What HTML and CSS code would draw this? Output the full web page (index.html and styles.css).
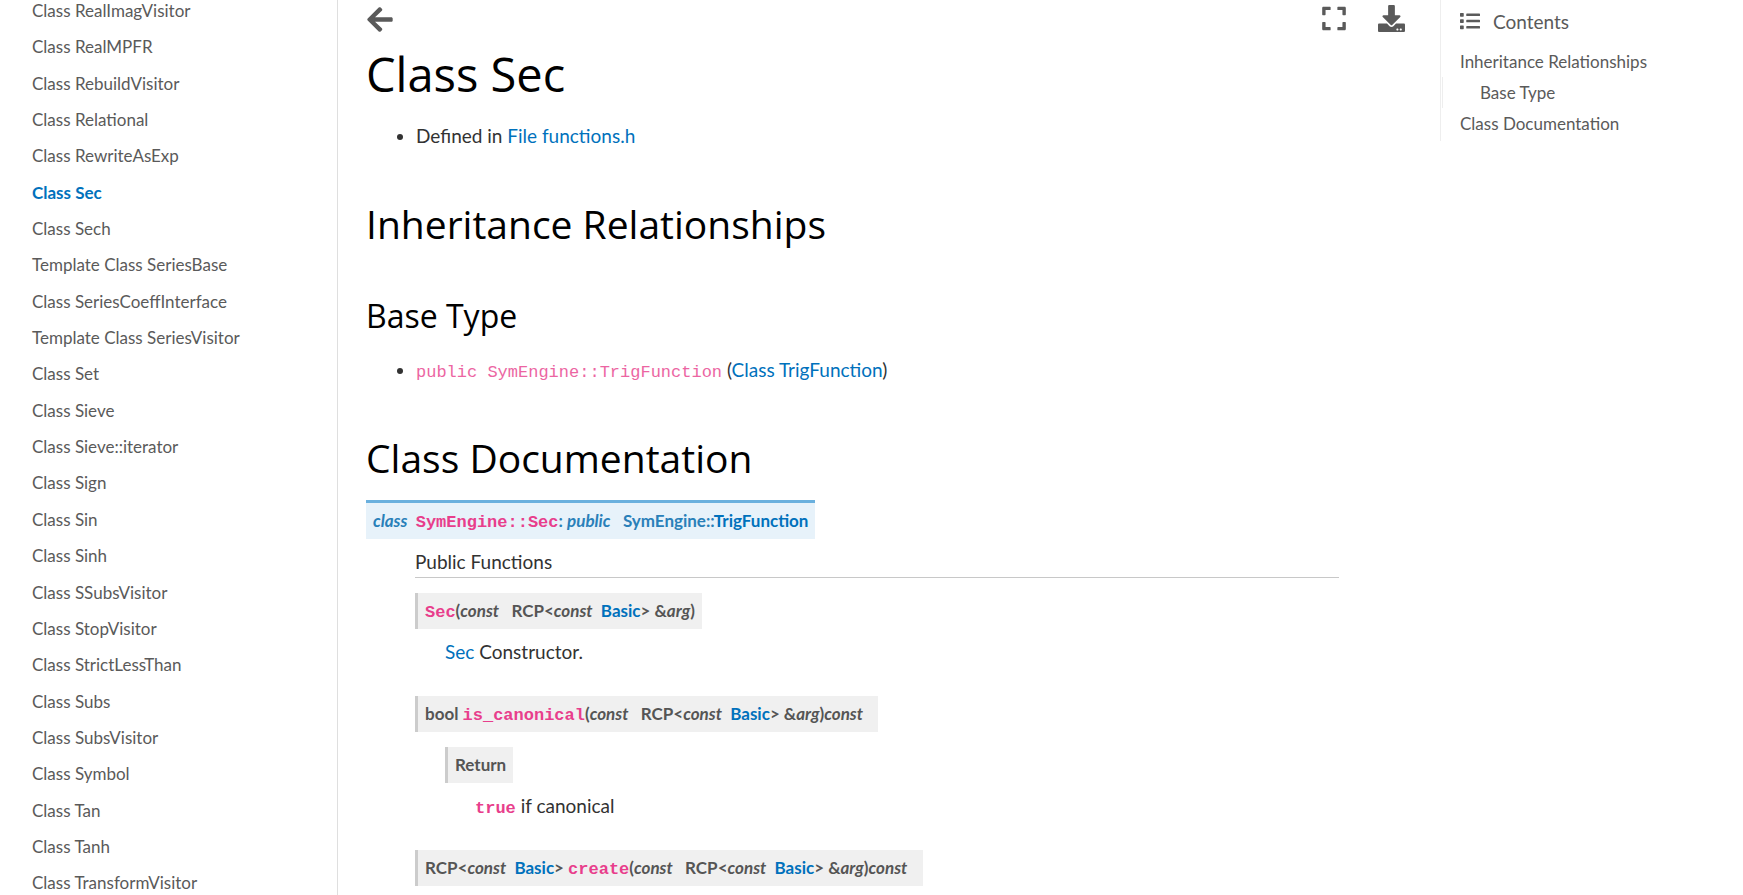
FILE: index.html
```html
<!DOCTYPE html>
<html lang="en">
<head>
<meta charset="utf-8">
<title>Class Sec</title>
<link rel="stylesheet" href="styles.css">
</head>
<body>
<div class="layout">
  <nav class="sidebar" aria-label="Classes">
    <ul class="nav-list">
      <li><a href="#">Class RealImagVisitor</a></li>
      <li><a href="#">Class RealMPFR</a></li>
      <li><a href="#">Class RebuildVisitor</a></li>
      <li><a href="#">Class Relational</a></li>
      <li><a href="#">Class RewriteAsExp</a></li>
      <li><a href="#" class="current">Class Sec</a></li>
      <li><a href="#">Class Sech</a></li>
      <li><a href="#">Template Class SeriesBase</a></li>
      <li><a href="#">Class SeriesCoeffInterface</a></li>
      <li><a href="#">Template Class SeriesVisitor</a></li>
      <li><a href="#">Class Set</a></li>
      <li><a href="#">Class Sieve</a></li>
      <li><a href="#">Class Sieve::iterator</a></li>
      <li><a href="#">Class Sign</a></li>
      <li><a href="#">Class Sin</a></li>
      <li><a href="#">Class Sinh</a></li>
      <li><a href="#">Class SSubsVisitor</a></li>
      <li><a href="#">Class StopVisitor</a></li>
      <li><a href="#">Class StrictLessThan</a></li>
      <li><a href="#">Class Subs</a></li>
      <li><a href="#">Class SubsVisitor</a></li>
      <li><a href="#">Class Symbol</a></li>
      <li><a href="#">Class Tan</a></li>
      <li><a href="#">Class Tanh</a></li>
      <li><a href="#">Class TransformVisitor</a></li>
    </ul>
  </nav>
  <main class="main">
    <div class="topbar">
      <button class="icon-button" type="button" aria-label="Toggle navigation">
        <svg width="28" height="29" viewBox="0 0 448 512"><path d="M257.500 445.100l-22.200 22.200c-9.400 9.400-24.600 9.400-33.900 0L7 273c-9.400-9.400-9.400-24.600 0-33.900L201.400 44.700c9.400-9.400 24.600-9.400 33.900 0l22.200 22.200c9.500 9.500 9.300 25-.4 34.300L136.600 216H424c13.300 0 24 10.700 24 24v32c0 13.300-10.700 24-24 24H136.600l120.500 114.800c9.800 9.300 10 24.800.4 34.300z"/></svg>
      </button>
      <div class="actions">
        <button class="icon-button" type="button" aria-label="Fullscreen mode">
          <svg width="24" height="27" viewBox="0 0 448 512"><path d="M0 180V56c0-13.300 10.700-24 24-24h124c6.600 0 12 5.400 12 12v40c0 6.600-5.400 12-12 12H64v84c0 6.600-5.400 12-12 12H12c-6.600 0-12-5.400-12-12zM288 44v40c0 6.600 5.400 12 12 12h84v84c0 6.600 5.400 12 12 12h40c6.600 0 12-5.400 12-12V56c0-13.300-10.700-24-24-24H300c-6.600 0-12 5.400-12 12zm148 276h-40c-6.600 0-12 5.400-12 12v84h-84c-6.600 0-12 5.400-12 12v40c0 6.600 5.400 12 12 12h124c13.300 0 24-10.700 24-24V332c0-6.600-5.400-12-12-12zM160 468v-40c0-6.600-5.400-12-12-12H64v-84c0-6.600-5.400-12-12-12H12c-6.600 0-12 5.400-12 12v124c0 13.300 10.700 24 24 24h124c6.600 0 12-5.400 12-12z"/></svg>
        </button>
        <button class="icon-button" type="button" aria-label="Download this page">
          <svg width="27" height="27" viewBox="0 0 512 512"><path d="M216 0h80c13.300 0 24 10.700 24 24v168h87.700c17.800 0 26.700 21.500 14.100 34.100L269.700 378.300c-7.500 7.500-19.800 7.500-27.300 0L90.100 226.100c-12.600-12.600-3.700-34.100 14.100-34.100H192V24c0-13.300 10.700-24 24-24zm296 376v112c0 13.300-10.700 24-24 24H24c-13.300 0-24-10.700-24-24V376c0-13.300 10.700-24 24-24h146.700l49 49c20.100 20.100 52.500 20.100 72.600 0l49-49H488c13.300 0 24 10.700 24 24zm-124 88c0-11-9-20-20-20s-20 9-20 20 9 20 20 20 20-9 20-20zm64 0c0-11-9-20-20-20s-20 9-20 20 9 20 20 20 20-9 20-20z"/></svg>
        </button>
      </div>
    </div>
    <article class="article">
      <h1>Class Sec</h1>
      <ul class="bullets">
        <li>Defined in <a href="#">File functions.h</a></li>
      </ul>
      <section>
        <h2 id="inheritance">Inheritance Relationships</h2>
        <h3 id="base-type">Base Type</h3>
        <ul class="bullets">
          <li><code class="literal">public SymEngine::TrigFunction</code> (<a href="#">Class TrigFunction</a>)</li>
        </ul>
      </section>
      <section>
        <h2 id="documentation">Class Documentation</h2>
        <dl class="class-doc">
          <dt class="signature signature-class"><em>class</em> &nbsp;<code>SymEngine::Sec</code>: <em>public</em> &nbsp; SymEngine::<a href="#">TrigFunction</a></dt>
          <dd>
            <p class="rubric">Public Functions</p>
            <dl class="member">
              <dt class="signature"><code>Sec</code>(<em>const</em> &nbsp; RCP&lt;<em>const</em>&nbsp; <a href="#">Basic</a>&gt; &amp;<em>arg</em>)</dt>
              <dd><p><a href="#">Sec</a> Constructor.</p></dd>
            </dl>
            <dl class="member">
              <dt class="signature">bool <code>is_canonical</code>(<em>const</em> &nbsp; RCP&lt;<em>const</em>&nbsp; <a href="#">Basic</a>&gt; &amp;<em>arg</em>)<em>const</em> &nbsp; </dt>
              <dd>
                <dl class="field">
                  <dt class="signature">Return</dt>
                  <dd><p><code>true</code> if canonical</p></dd>
                </dl>
              </dd>
            </dl>
            <dl class="member">
              <dt class="signature">RCP&lt;<em>const</em>&nbsp; <a href="#">Basic</a>&gt; <code>create</code>(<em>const</em> &nbsp; RCP&lt;<em>const</em>&nbsp; <a href="#">Basic</a>&gt; &amp;<em>arg</em>)<em>const</em> &nbsp; </dt>
            </dl>
          </dd>
        </dl>
      </section>
    </article>
  </main>
  <aside class="toc-column">
    <nav class="toc" aria-label="Contents">
      <div class="toc-title">
        <svg width="20" height="20" viewBox="0 0 512 512"><path d="M80 368H16a16 16 0 0 0-16 16v64a16 16 0 0 0 16 16h64a16 16 0 0 0 16-16v-64a16 16 0 0 0-16-16zm0-320H16A16 16 0 0 0 0 64v64a16 16 0 0 0 16 16h64a16 16 0 0 0 16-16V64a16 16 0 0 0-16-16zm0 160H16a16 16 0 0 0-16 16v64a16 16 0 0 0 16 16h64a16 16 0 0 0 16-16v-64a16 16 0 0 0-16-16zm416 176H176a16 16 0 0 0-16 16v32a16 16 0 0 0 16 16h320a16 16 0 0 0 16-16v-32a16 16 0 0 0-16-16zm0-320H176a16 16 0 0 0-16 16v32a16 16 0 0 0 16 16h320a16 16 0 0 0 16-16V80a16 16 0 0 0-16-16zm0 160H176a16 16 0 0 0-16 16v32a16 16 0 0 0 16 16h320a16 16 0 0 0 16-16v-32a16 16 0 0 0-16-16z"/></svg>
        <span>Contents</span>
      </div>
      <ul class="toc-list">
        <li><a href="#inheritance">Inheritance Relationships</a>
          <ul class="toc-sub"><li><a href="#base-type">Base Type</a></li></ul>
        </li>
        <li><a href="#documentation">Class Documentation</a></li>
      </ul>
    </nav>
  </aside>
</div>
</body>
</html>
```
FILE: styles.css
```css
* { box-sizing: border-box; }
body {
  margin: 0;
  background: #fff;
  color: #323232;
  font: 19px/31px Lato, sans-serif;
  overflow: hidden;
}
a { color: #0071bc; text-decoration: none; }
ul, dl, dd, p { margin: 0; padding: 0; }
svg { display: block; fill: currentColor; }
.layout {
  display: grid;
  grid-template-columns: 338px minmax(0, 1fr) 303px;
  height: 100vh;
}
.sidebar {
  border-right: 1px solid #dfdfdf;
  padding: 0 32px;
  overflow: hidden;
}
.nav-list { list-style: none; margin-top: -7px; font-size: 17px; line-height: 1.55; }
.nav-list a { display: block; padding: 5px 0; color: #5a5a5a; }
.nav-list .current { color: #0071bc; font-weight: bold; }

.main { padding: 0 28px; overflow: hidden; }
.topbar { display: flex; justify-content: space-between; height: 47px; padding-top: 3px; }
.actions { display: flex; gap: 32px; padding-right: 7px; }
.icon-button {
  display: flex;
  align-items: flex-start;
  padding: 2px 0;
  border: 0;
  background: none;
  color: #5a5a5a;
}
.article { padding-right: 73px; }
h1, h2, h3 { margin: 0; color: #000; font-family: "Open Sans", sans-serif; font-weight: 400; line-height: 1.15; }
h1 { font-size: 47px; margin-bottom: 19px; }
h2 { font-size: 39px; margin: 51px 0 19px; }
h3 { font-size: 32px; margin: 51px 0 19px; }
.bullets { padding-left: 50px; }
code { color: #e83e8c; font: 17px/1 "Liberation Mono", monospace; }
.signature code, .field code { font-weight: bold; }
.literal { opacity: .8; }

.signature {
  display: table;
  padding: 3px 7px;
  border-left: 3px solid #ccc;
  background: #f0f0f0;
  color: #555;
  font-size: 17px;
  line-height: 30px;
  font-weight: bold;
}
.signature-class {
  border-left: 0;
  border-top: 3px solid #6ab0de;
  background: #e7f2fa;
  color: #2980b9;
}
.class-doc > dd { margin-left: 49px; }
.rubric { margin: 7px 0 15px; border-bottom: 1px solid #c8c8c8; }
.member { margin-bottom: 29px; }
.member dd { margin-left: 30px; padding-top: 7px; }
.field { padding-top: 8px; }

.toc { border-left: 1px solid #eee; padding: 0 0 2px 19px; }
.toc-title { display: flex; align-items: center; gap: 13px; height: 46px; padding-bottom: 4px; color: #5a5a5a; }
.toc-list, .toc-sub { list-style: none; font-size: 17px; line-height: 31px; }
.toc-list a { color: #5a5a5a; }
.toc-sub { margin-left: -18px; padding-left: 37px; border-left: 1px solid #eee; }
```
